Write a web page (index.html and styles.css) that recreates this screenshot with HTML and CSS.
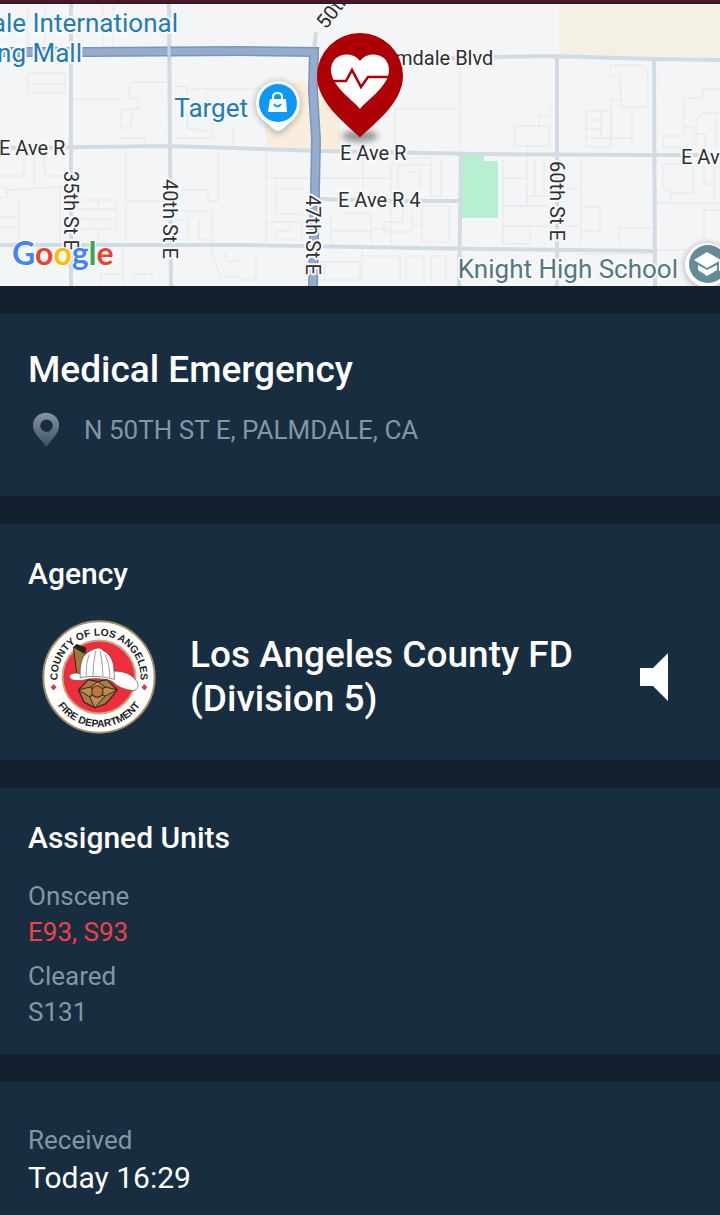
FILE: index.html
```html
<!DOCTYPE html>
<html lang="en">
<head>
    <meta charset="UTF-8">
    <meta name="viewport" content="width=device-width, initial-scale=1.0">
    <title>Medical Emergency</title>
    <link rel="stylesheet" href="styles.css">
</head>
<body>
    <div class="incident">
        <svg class="map" viewBox="0 4 720 282" role="img" aria-label="Map of the incident location">
            <defs>
                <filter id="soft" x="-50%" y="-50%" width="200%" height="200%">
                    <feGaussianBlur stdDeviation="3"/>
                </filter>
            </defs>
            <rect class="land" y="4" width="720" height="282"/>

            <!-- areas -->
            <path class="area-sand" d="M559 4H720V58L559 56Z"/>
            <path class="area-shop" d="M297 81H311V150L266 146V128H297ZM266 128L272 84H311V149L266 146ZM319 84L340 125V151L319 150Z"/>
            <path class="area-park" d="M461 154H484V161H498V218H461Z"/>

            <!-- small streets -->
            <path class="lane" d="M28 73H65V93H28ZM28 84H65M28 8V46M45 5V45M103 5V46M113 5V46M73 99H120M130 82H167M130 82L129 99H139V108H133L131 128H121V109H139M120 138H145V146M126 146V244M126 201H167M0 176H24V158M34 158V187M44 158L45 176H70M0 188H7V198H0M7 190L70 186M19 198V242M0 217H19M0 227H19M60 188V242M78 200H116V229H80M78 209H116M78 219H116M98 200V209M98 229V244M123 247V284M134 284V274H152V284M101 284V274H120"/>
            <path class="lane" d="M174 86L187 87V100M187 90L206 88V100M206 89H266M174 138H212V120M187 111V128L212 132M233 128V146M218 150V201H208V190H180M176 211H212V262M199 220V240H212M188 220V240H176V220H188M213 252L220 277H240M225 252L226 262L240 260M266 150V244M266 178H391M276 178V214H301M277 189H304M266 222H302V240H276V231H290V222M331 213V244M331 231H371V229H391M345 213H371V244M300 262H360V280H300M256 255V280H240M325 262V280M362 248V284M362 256H400V284M406 284V256H424V284M431 284V256H446V284"/>
            <path class="lane" d="M395 109H459M395 109V152M460 65V152M363 152V190M391 166V244M391 166L400 158H431V196M441 158V196H431M398 165H430M398 165V200M408 172H420V190M403 204V222H384V232H412V212M403 218H398M422 206H449V242H422ZM422 226H412M515 126H549V146H515ZM539 126V116H550V108L555 104M503 158V244M503 178H527M527 146V206H503M535 158V196M544 158V196M503 206H548M527 196H548M503 226H580M503 244H530V226M565 189H581M581 158V244M582 207H600V231H582M619 244V228H652"/>
            <path class="lane" d="M610 65H642Q648 68 648 77V107H621L620 76H610ZM620 100H611V146M632 107V146M586 111H611V147H586ZM601 111V138M586 120H601M586 129H601M586 138H632M606 148V153M663 136H684V98H703V89H720M663 136V147H693V127H684M696 147V120L704 113H720M696 134H705V147M716 113V147M664 164H693V193H671L663 188V164M671 193V203H656M656 203H720M704 203V240M714 164V200M704 164V184H714M704 210H720M656 250H690M575 254H652M600 254V284M632 254V284"/>

            <!-- roads -->
            <path class="road" d="M71 4V286M169 4L171 286M0 245H240L480 249L654 251M0 148L171 146L320 151L480 154L640 155H720M316 32L314 52M319 199L400 201H459M461 154L459 286M403 60L490 57L550 56L654 59L720 60M557 56L557 286M654 59L655 286"/>
            <path class="highway-edge" d="M0 52H90L240 51L314 52L313 90L316 140L315 190L313 286"/>
            <path class="highway" d="M0 52H90L240 51L314 52L313 90L316 140L315 190L313 286"/>
            <path class="road-line" d="M71 45V60M169 45V60"/>

            <!-- labels -->
            <g class="label">
                <text x="-1" y="155">E Ave R</text>
                <text x="340" y="160">E Ave R</text>
                <text x="338" y="207">E Ave R 4</text>
                <text x="681" y="164">E Av</text>
                <text x="395" y="65">mdale Blvd</text>
                <text transform="translate(64 171) rotate(90)">35th St E</text>
                <text transform="translate(163 179) rotate(90)">40th St E</text>
                <text transform="translate(306 195) rotate(90)">47th St E</text>
                <text transform="translate(550 161) rotate(90)">60th St E</text>
                <text transform="translate(326 30) rotate(-52)">50th</text>
            </g>
            <g class="label place">
                <text x="178" y="32" text-anchor="end">ale International</text>
                <text x="82" y="62" text-anchor="end">ng Mall</text>
                <text x="248" y="117" text-anchor="end">Target</text>
                <text class="school" x="678" y="278" text-anchor="end">Knight High School</text>
            </g>

            <!-- shop marker -->
            <g>
                <path d="M278 134Q272 134 268 127Q255 118 255 104A23 23 0 0 1 301 104Q301 118 288 127Q284 134 278 134Z" fill="#8a8f94" filter="url(#soft)" opacity=".6"/>
                <path d="M278 131Q273 130 268 124Q256 117 256 103A22 22 0 0 1 300 103Q300 117 288 124Q283 130 278 131Z" fill="#fff"/>
                <circle cx="278" cy="103" r="19" fill="#0d98f5"/>
                <path d="M270 99H286L287 112H268Z" fill="#fff"/>
                <path d="M273 99V97Q273 93 277.500 93Q282 93 282 97V99" fill="none" stroke="#fff" stroke-width="2"/>
                <path d="M274 104Q277.500 109 281 104" fill="none" stroke="#0d98f5" stroke-width="2"/>
            </g>

            <!-- school marker -->
            <g>
                <circle cx="707" cy="266" r="23" fill="#8a8f94" filter="url(#soft)" opacity=".6"/>
                <circle cx="707" cy="265" r="22" fill="#fff"/>
                <circle cx="708" cy="264" r="19" fill="#668b98"/>
                <path d="M694 260L707 252L721 260L707 268ZM698 265L707 270L717 265V270L707 276L698 270ZM719 260H721V271H719Z" fill="#fff"/>
            </g>

            <!-- incident marker -->
            <ellipse cx="360" cy="136" rx="18" ry="6" fill="#555" opacity=".6" filter="url(#soft)"/>
            <path d="M360 137.500C349 126 317 104 317 76A43 43 0 0 1 403 76C403 104 371 126 360 137.500Z" fill="#ad0006"/>
            <path d="M360 109C352 99 331 86 331 70C331 53 352 50 360 61C368 50 389 53 389 70C389 86 368 99 360 109Z" fill="#fff"/>
            <path d="M331 81H346L352 70L361 87L368 77H390" fill="none" stroke="#ad0006" stroke-width="2.500"/>

            <text class="google" x="12" y="265"><tspan fill="#4285f4">G</tspan><tspan fill="#ea4335">o</tspan><tspan fill="#fbbc05">o</tspan><tspan fill="#4285f4">g</tspan><tspan fill="#34a853">l</tspan><tspan fill="#ea4335">e</tspan></text>
        </svg>

        <section class="card">
            <h1>Medical Emergency</h1>
            <p class="address">
                <svg class="pin" viewBox="0 0 28 36" aria-hidden="true">
                    <linearGradient id="pin-fill" x2="0" y2="1">
                        <stop offset="0" stop-color="#8795a1"/>
                        <stop offset="1" stop-color="#3c5061"/>
                    </linearGradient>
                    <path fill="url(#pin-fill)" fill-rule="evenodd" d="M14 36C10 28 0 23 0 13A13.500 13 0 0 1 27 13C27 23 18 28 14 36ZM14 7A6.500 6.500 0 1 0 14 20A6.500 6.500 0 1 0 14 7Z"/>
                </svg>
                N 50TH ST E, PALMDALE, CA
            </p>
        </section>

        <section class="card">
            <h2>Agency</h2>
            <div class="agency">
                <svg class="seal" viewBox="36 28 344 344" role="img" aria-label="County of Los Angeles Fire Department">
                    <defs>
                        <path id="ring-top" d="M208 325A125 125 0 0 1 208 75A125 125 0 0 1 208 325"/>
                        <path id="ring-bottom" d="M208 49A151 151 0 0 0 208 351A151 151 0 0 0 208 49"/>
                    </defs>
                    <circle cx="208" cy="200" r="168" fill="#fff" stroke="#a09168" stroke-width="6"/>
                    <circle cx="208" cy="200" r="110" fill="#ee2e3c" stroke="#c9a583" stroke-width="6"/>
                    <text class="seal-text"><textPath href="#ring-top" startOffset="50%">COUNTY OF LOS ANGELES</textPath></text>
                    <text class="seal-text"><textPath href="#ring-bottom" startOffset="50%">FIRE DEPARTMENT</textPath></text>
                    <path d="M71 221L80 231L71 241L62 231ZM345 221L354 231L345 241L336 231Z" fill="#d93b55"/>
                    <!-- helmet -->
                    <path d="M131 110L141 102L168 112L160 198L141 190Z" fill="#9c7a3c" stroke="#33271a" stroke-width="3"/>
                    <path d="M131 110L141 102L168 112L163 130Z" fill="#2a211b"/>
                    <path d="M118 196Q128 184 152 190L250 182Q300 180 323 214Q332 238 312 241Q272 238 246 212Q200 198 158 210Q118 214 118 196Z" fill="#fff" stroke="#5c4a3c" stroke-width="2"/>
                    <path d="M151 202Q149 146 170 128Q186 118 198 114Q212 110 219 119Q246 132 252 164L255 207Q204 192 151 202Z" fill="#fff" stroke="#5c4a3c" stroke-width="2"/>
                    <path d="M179 132Q167 160 170 198M198 122Q190 160 190 197M212 122Q219 160 220 197M226 132Q240 160 241 201" fill="none" stroke="#9b9c98" stroke-width="3"/>
                    <!-- badge -->
                    <path d="M146 239L176 208L204 214L232 208L263 239L240 268L226 282L195 293L163 276Z" fill="#a77b43" stroke="#38281a" stroke-width="4"/>
                    <path d="M146 239L182 230L204 214L226 230L263 239L226 258L195 293L180 260Z" fill="#b98d50" stroke="#38281a" stroke-width="3"/>
                    <path d="M182 230L190 238M226 230L216 238M180 260L190 252M226 258L216 252" stroke="#38281a" stroke-width="4"/>
                    <circle cx="203" cy="244" r="17" fill="#bd7447" stroke="#5b371e" stroke-width="4"/>
                </svg>
                <p class="agency-name">Los Angeles County FD (Division 5)</p>
                <button class="listen" type="button" aria-label="Listen">
                    <svg viewBox="0 0 28 48" aria-hidden="true"><path fill="#fff" d="M0 15H13L28 0V48L13 33H0Z"/></svg>
                </button>
            </div>
        </section>

        <section class="card">
            <h2>Assigned Units</h2>
            <dl class="units">
                <div>
                    <dt>Onscene</dt>
                    <dd class="onscene">E93, S93</dd>
                </div>
                <div>
                    <dt>Cleared</dt>
                    <dd>S131</dd>
                </div>
            </dl>
        </section>

        <section class="card times">
            <dl>
                <dt>Received</dt>
                <dd class="time">Today 16:29</dd>
            </dl>
        </section>
    </div>
</body>
</html>
```
FILE: styles.css
```css
* {
  box-sizing: border-box;
}

body {
  margin: 0;
  font-family: Roboto, sans-serif;
  font-size: 26px;
  line-height: 36px;
  color: #8496a4;
  background-color: #12212d;
}

h1, h2, p, dl, dd {
  margin: 0;
}

.incident {
  display: flex;
  flex-direction: column;
  gap: 28px;
  min-height: 100vh;
  border-top: 3px solid #4e1527;
}

.card {
  padding: 28px 28px 24px;
  background-color: #182d3f;
}

h1 {
  font-size: 37px;
  font-weight: 500;
  line-height: 56px;
  color: #fff;
}

h2 {
  font-size: 30px;
  font-weight: 500;
  line-height: 44px;
  color: #fff;
}

/* Map */
.map {
  display: block;
  width: 100%;
  border-top: 1px solid #12212d;
}

.land {
  fill: #f4f5f6;
}

.area-sand {
  fill: #f5f0e5;
}

.area-shop {
  fill: #f9eedb;
}

.area-park {
  fill: #b7f0d0;
}

.lane {
  fill: none;
  stroke: #e4e7eb;
  stroke-width: 1;
}

.road {
  fill: none;
  stroke: #d1dbe3;
  stroke-width: 4;
}

.road-line {
  stroke: #c3d2e2;
  stroke-width: 3;
}

.highway-edge {
  fill: none;
  stroke: #7a95b8;
  stroke-width: 10;
}

.highway {
  fill: none;
  stroke: #94acce;
  stroke-width: 7;
}

.label {
  font-size: 20px;
  fill: #2d3033;
  stroke: #f8f9fa;
  stroke-width: 4;
  stroke-linejoin: round;
  paint-order: stroke;
}

.place {
  font-size: 26px;
  fill: #237bb5;
}

.school {
  fill: #557782;
}

.google {
  font-family: Lato, sans-serif;
  font-size: 32px;
  font-weight: 700;
  stroke: #fff;
  stroke-width: 2;
  paint-order: stroke;
}

/* Address */
.address {
  display: flex;
  align-items: center;
  gap: 24px;
  margin: 12px 0 22px;
  padding-left: 5px;
  line-height: 40px;
}

.pin {
  width: 27px;
  height: 36px;
}

/* Agency */
.agency {
  display: flex;
  align-items: center;
  margin-top: 24px;
  padding: 0 24px 2px 14px;
}

.seal {
  flex: none;
  width: 114px;
  height: 114px;
}

.seal-text {
  font-family: "Liberation Sans", Arial, sans-serif;
  font-size: 31px;
  font-weight: 700;
  text-anchor: middle;
  fill: #1d1d1d;
}

.agency-name {
  flex: 1;
  margin: 0 32px 0 34px;
  font-size: 37px;
  font-weight: 500;
  line-height: 44px;
  color: #fff;
}

.listen {
  flex: none;
  padding: 0;
  border: 0;
  background: none;
  cursor: pointer;
}

.listen svg {
  display: block;
  width: 28px;
  height: 48px;
}

/* Units */
.units {
  display: flex;
  flex-direction: column;
  gap: 8px;
  margin-top: 18px;
}

.onscene {
  color: #ee414a;
}

/* Times */
.times {
  flex: 1;
  padding-top: 40px;
  padding-bottom: 16px;
}

.time {
  font-size: 30px;
  line-height: 40px;
  color: #fff;
}
```
